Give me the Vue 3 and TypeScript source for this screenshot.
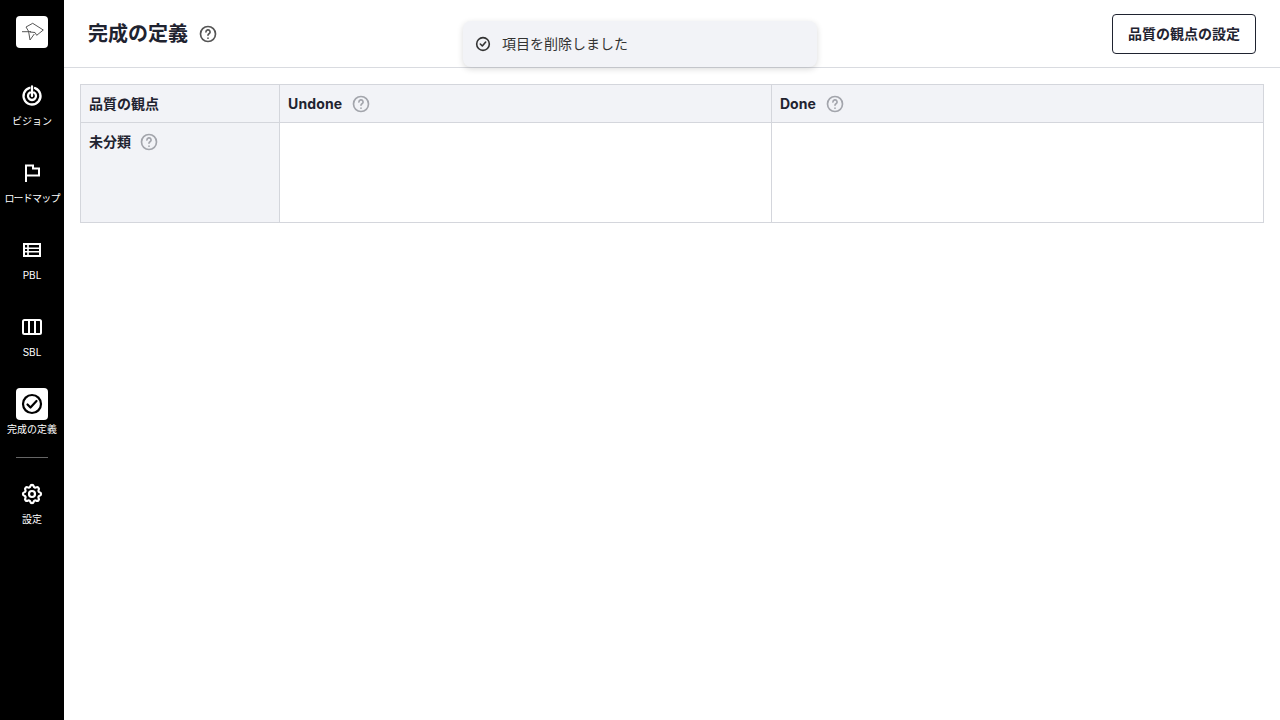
<script setup lang="ts">
const navItems = [
  { key: "vision", label: "ビジョン" },
  { key: "roadmap", label: "ロードマップ" },
  { key: "pbl", label: "PBL" },
  { key: "sbl", label: "SBL" },
  { key: "dod", label: "完成の定義", active: true },
];
</script>

<template>
  <div class="app">
    <aside class="sidebar">
      <div class="logo">
        <svg width="32" height="32" viewBox="0 0 32 32" fill="none" stroke="#444" stroke-width="0.9" stroke-linejoin="round">
          <path d="M6 15.700h9" />
          <path d="M10 11l6.700-3.700 10.600 6.700-6.600 5.300-1.700-2.800-5-.5" />
          <path d="M12.700 16l1.300 8 4.300-6" />
          <path d="M10 11l3 5" />
        </svg>
      </div>
      <nav class="nav">
        <a v-for="item in navItems" :key="item.key" class="nav-item" :class="{ active: item.active }">
          <span class="nav-icon">
            <svg v-if="item.key === 'vision'" width="24" height="24" viewBox="0 0 24 24" fill="none" stroke="currentColor" stroke-width="2.300" stroke-linecap="round">
              <path d="M9.500 3.880A8.500 8.500 0 1 0 15 4.050" />
              <path d="M10 8.540A4 4 0 1 0 14 8.540" />
              <path d="M12 2.500V12" />
            </svg>
            <svg v-else-if="item.key === 'roadmap'" width="24" height="24" viewBox="0 0 24 24" fill="none" stroke="currentColor" stroke-width="2" stroke-linejoin="miter">
              <path d="M6 21V4.500h7v3h6v7H6" />
            </svg>
            <svg v-else-if="item.key === 'pbl'" width="24" height="24" viewBox="0 0 24 24" fill="none" stroke="currentColor" stroke-width="2">
              <rect x="4" y="6" width="16" height="12" />
              <path d="M4 10.200h16M4 13.800h16M8 6v12" stroke-width="1.600" />
            </svg>
            <svg v-else-if="item.key === 'sbl'" width="24" height="24" viewBox="0 0 24 24" fill="none" stroke="currentColor" stroke-width="2">
              <rect x="3" y="5" width="18" height="14" rx="1.500" />
              <path d="M9 5v14M15 5v14" />
            </svg>
            <svg v-else width="24" height="24" viewBox="0 0 24 24" fill="none" stroke="currentColor" stroke-width="2.200" stroke-linecap="round" stroke-linejoin="round">
              <circle cx="12" cy="12" r="9" />
              <path d="M7.500 12.500l3 3 6-6.500" />
            </svg>
          </span>
          <span class="nav-label" :class="{ tight: item.key === 'roadmap' }">{{ item.label }}</span>
        </a>
      </nav>
      <div class="divider"></div>
      <a class="nav-item">
        <span class="nav-icon">
          <svg width="24" height="24" viewBox="0 0 24 24" fill="none" stroke="currentColor" stroke-width="2.200" stroke-linejoin="round">
            <path d="M10.300 4.300c.4-1.800 3-1.800 3.400 0a1.700 1.700 0 0 0 2.600 1.100c1.500-.9 3.300.8 2.400 2.400a1.700 1.700 0 0 0 1 2.500c1.800.4 1.800 3 0 3.400a1.700 1.700 0 0 0-1 2.600c.9 1.500-.9 3.300-2.400 2.400a1.700 1.700 0 0 0-2.600 1c-.4 1.800-3 1.800-3.400 0a1.700 1.700 0 0 0-2.600-1c-1.500.9-3.300-.9-2.400-2.400a1.700 1.700 0 0 0-1-2.600c-1.800-.4-1.800-3 0-3.400a1.700 1.700 0 0 0 1-2.500c-.9-1.600.9-3.300 2.400-2.400a1.700 1.700 0 0 0 2.600-1.100z" />
            <circle cx="12" cy="12" r="3" />
          </svg>
        </span>
        <span class="nav-label">設定</span>
      </a>
    </aside>

    <main class="main">
      <header class="header">
        <div class="title-row">
          <h1 class="title">完成の定義</h1>
          <svg class="help help-title" width="20" height="20" viewBox="0 0 24 24" fill="none" stroke="currentColor" stroke-width="2" stroke-linecap="round">
            <circle cx="12" cy="12" r="9" />
            <path d="M9.500 9.500a2.500 2.500 0 1 1 3.700 2.200c-.8.500-1.200 1-1.200 1.800" />
            <path d="M12 17v.01" />
          </svg>
        </div>
        <button class="settings-btn"><span class="lift">品質の観点の設定</span></button>
      </header>

      <section class="content">
        <div class="table">
          <div class="cell head"><span class="lift">品質の観点</span></div>
          <div class="cell head">
            <span class="undone">Undone</span>
            <svg class="help latin" width="20" height="20" viewBox="0 0 24 24" fill="none" stroke="currentColor" stroke-width="2" stroke-linecap="round">
              <circle cx="12" cy="12" r="9" />
              <path d="M9.500 9.500a2.500 2.500 0 1 1 3.700 2.200c-.8.500-1.200 1-1.200 1.800" />
              <path d="M12 17v.01" />
            </svg>
          </div>
          <div class="cell head">
            <span>Done</span>
            <svg class="help latin" width="20" height="20" viewBox="0 0 24 24" fill="none" stroke="currentColor" stroke-width="2" stroke-linecap="round">
              <circle cx="12" cy="12" r="9" />
              <path d="M9.500 9.500a2.500 2.500 0 1 1 3.700 2.200c-.8.500-1.200 1-1.200 1.800" />
              <path d="M12 17v.01" />
            </svg>
          </div>
          <div class="cell head row-head">
            <span class="lift">未分類</span>
            <svg class="help" width="20" height="20" viewBox="0 0 24 24" fill="none" stroke="currentColor" stroke-width="2" stroke-linecap="round">
              <circle cx="12" cy="12" r="9" />
              <path d="M9.500 9.500a2.500 2.500 0 1 1 3.700 2.200c-.8.500-1.200 1-1.200 1.800" />
              <path d="M12 17v.01" />
            </svg>
          </div>
          <div class="cell body"></div>
          <div class="cell body"></div>
        </div>
      </section>
    </main>

    <div class="toast">
      <svg width="16" height="16" viewBox="0 0 24 24" fill="none" stroke="currentColor" stroke-width="2.400" stroke-linecap="round" stroke-linejoin="round">
        <circle cx="12" cy="12" r="9.500" />
        <path d="M8 12l3 3 5-6" />
      </svg>
      <span class="lift">項目を削除しました</span>
    </div>
  </div>
</template>

<style scoped>
.app {
  display: flex;
  min-height: 720px;
  font-family: Inter, "Noto Sans CJK JP", sans-serif;
  color: #1f2330;
}

.sidebar {
  width: 64px;
  flex-shrink: 0;
  background: #000;
  display: flex;
  flex-direction: column;
  align-items: center;
  padding-top: 16px;
  box-sizing: border-box;
}

.logo {
  width: 32px;
  height: 32px;
  border-radius: 4px;
  background: #fff;
  display: flex;
  align-items: center;
  justify-content: center;
  margin-bottom: 32px;
}

.nav {
  display: flex;
  flex-direction: column;
  align-items: center;
  gap: 27px;
}

.nav-item {
  display: flex;
  flex-direction: column;
  align-items: center;
  color: #fff;
  width: 64px;
}

.nav-icon {
  width: 32px;
  height: 32px;
  border-radius: 4px;
  display: flex;
  align-items: center;
  justify-content: center;
}

.nav-item.active .nav-icon {
  background: #fff;
  color: #000;
}

.nav-label {
  font-size: 10px;
  line-height: 18px;
  white-space: nowrap;
}

.nav-label.tight {
  letter-spacing: -0.8px;
}

.divider {
  width: 32px;
  height: 1px;
  background: #666;
  margin: 19px 0 20px;
}

.main {
  flex: 1;
  min-width: 0;
}

.header {
  height: 68px;
  box-sizing: border-box;
  border-bottom: 1px solid #d9dbe0;
  display: flex;
  align-items: center;
  justify-content: space-between;
  padding: 0 24px;
}

.title-row {
  display: flex;
  align-items: center;
  gap: 10px;
}

.title {
  margin: 0 0 2px;
  font-size: 20px;
  font-weight: 700;
}

.help {
  color: #a3a5ac;
  margin-left: 8px;
}

.help.latin {
  margin-left: 9px;
}

.help-title {
  color: #555;
  margin: 0;
}

.lift {
  position: relative;
  top: -1px;
}

.undone {
  letter-spacing: 0.15px;
}

.settings-btn {
  height: 40px;
  width: 144px;
  background: #fff;
  border: 1px solid #1f2330;
  border-radius: 4px;
  font-family: inherit;
  font-size: 14px;
  font-weight: 700;
  color: #1f2330;
}

.content {
  padding: 16px;
}

.table {
  display: grid;
  grid-template-columns: 199px 1fr 1fr;
  grid-template-rows: 38px 100px;
  border-top: 1px solid #d4d6dc;
  border-left: 1px solid #d4d6dc;
}

.cell {
  border-right: 1px solid #d4d6dc;
  border-bottom: 1px solid #d4d6dc;
  box-sizing: border-box;
}

.head {
  background: #f2f3f7;
  display: flex;
  align-items: center;
  padding: 0 8px;
  font-size: 14px;
  font-weight: 700;
}

.row-head {
  align-items: flex-start;
  padding-top: 9px;
}

.toast {
  position: absolute;
  left: 463px;
  top: 21px;
  width: 354px;
  height: 46px;
  background: #f2f3f7;
  border-radius: 8px;
  box-shadow: 0 2px 6px rgba(0, 0, 0, 0.15);
  display: flex;
  align-items: center;
  gap: 11px;
  padding-left: 12px;
  box-sizing: border-box;
  font-size: 14px;
  color: #333;
}
</style>
